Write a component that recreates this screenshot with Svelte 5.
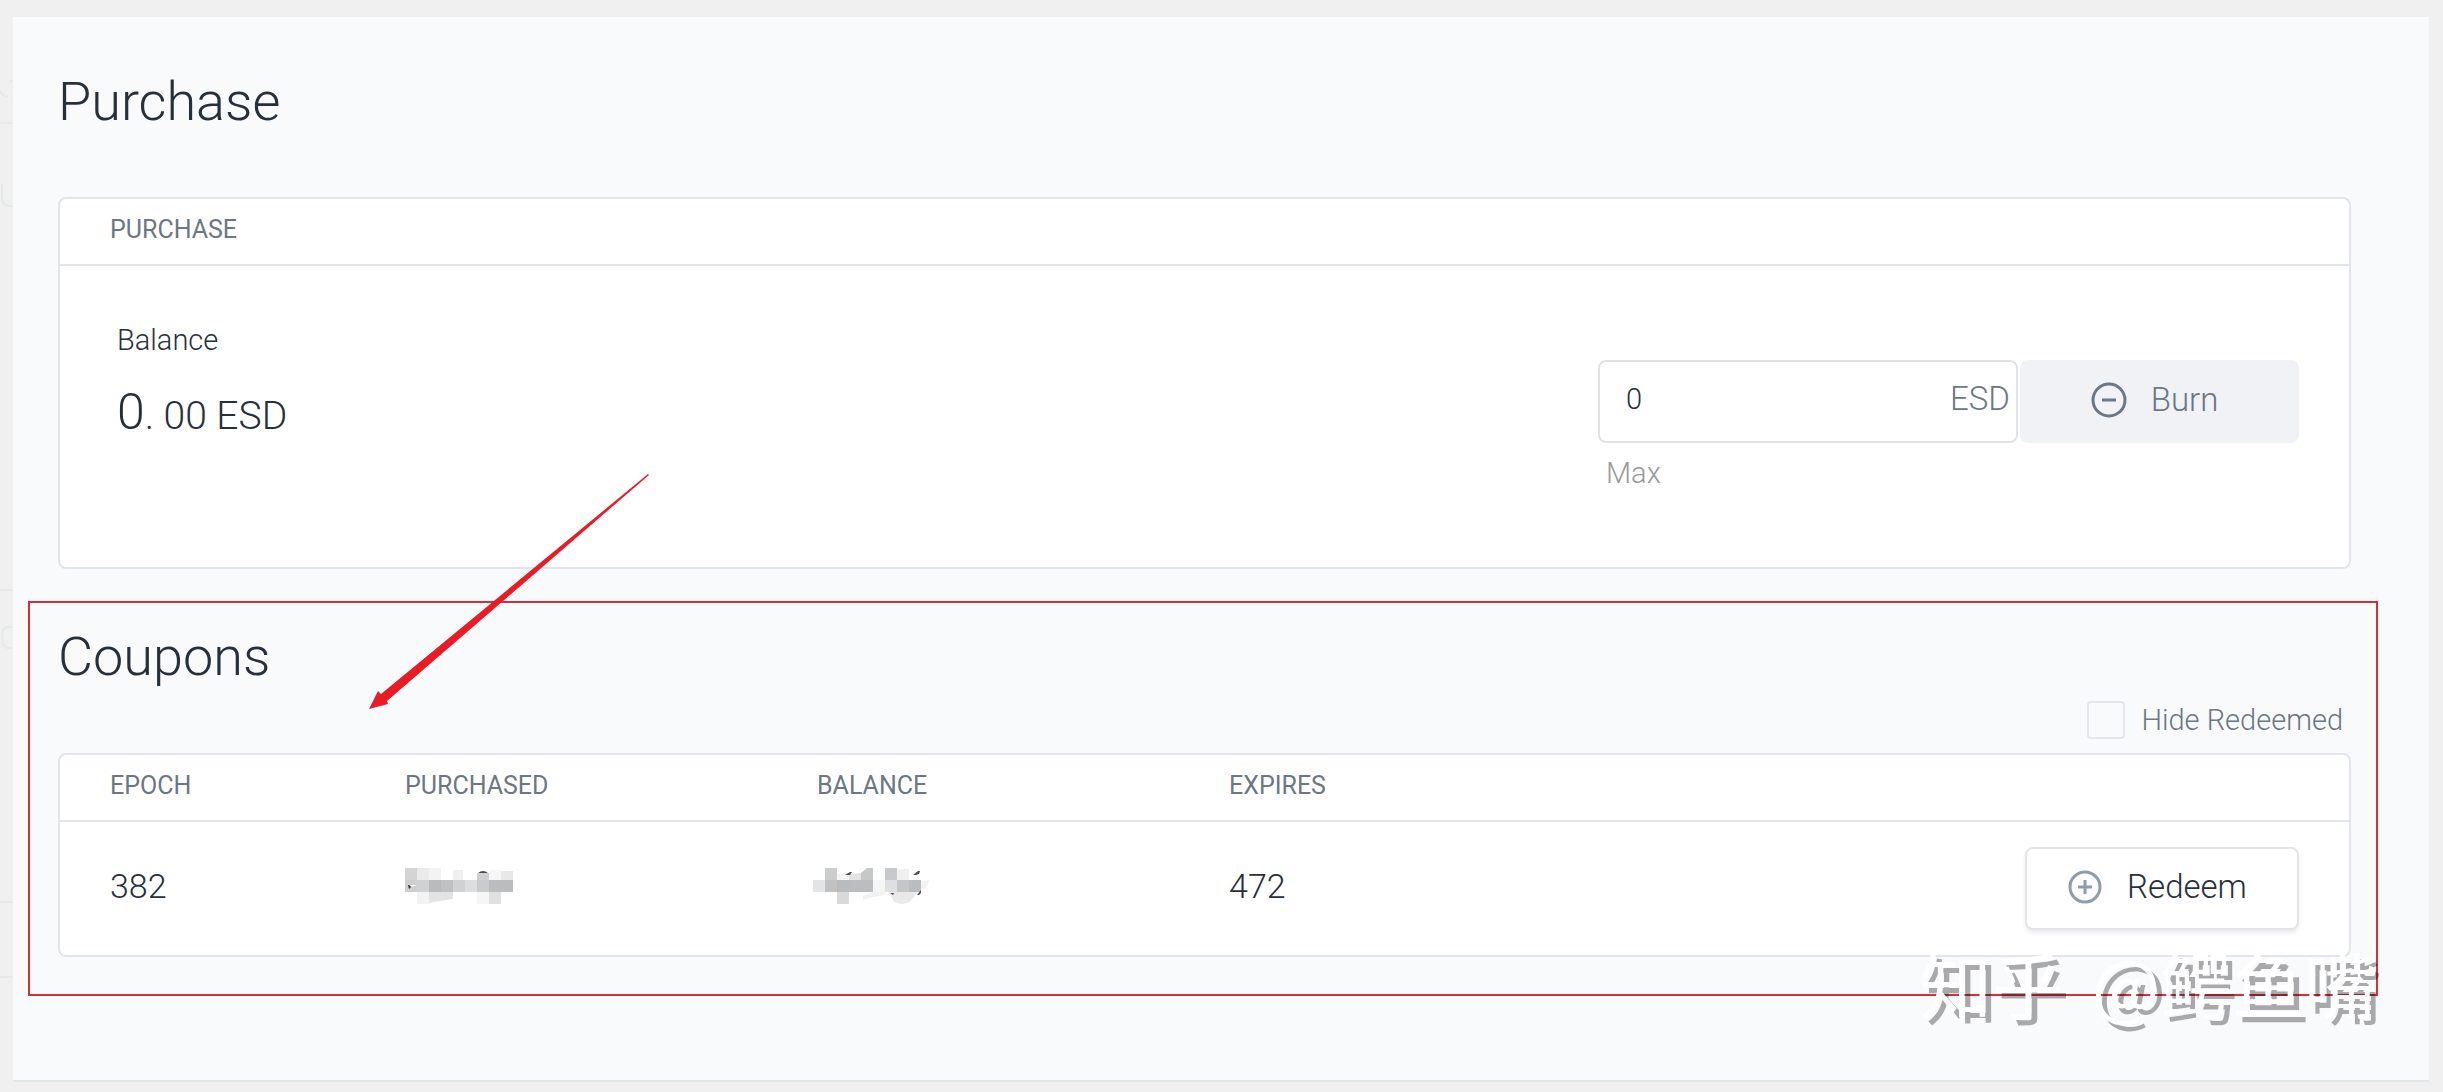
<script lang="ts">
	interface Tile {
		x: number;
		y: number;
		w: number;
		h: number;
		fill: string;
	}

	let amount = $state('0');
	let hideRedeemed = $state(false);

	const coupons = [{ epoch: 382, expires: 472 }];

	// pixelated blocks over the hidden amounts
	const purchasedTiles: Tile[] = [
		{ x: 0, y: 6, w: 12, h: 12, fill: '#d4d4d4' },
		{ x: 12, y: 6, w: 12, h: 12, fill: '#ebebeb' },
		{ x: 24, y: 6, w: 12, h: 12, fill: '#f3f3f3' },
		{ x: 48, y: 8, w: 10, h: 10, fill: '#f0f0f0' },
		{ x: 72, y: 11, w: 12, h: 7, fill: '#cfcfd1' },
		{ x: 84, y: 8, w: 12, h: 10, fill: '#f6f6f6' },
		{ x: 96, y: 9, w: 12, h: 9, fill: '#e8e8e8' },
		{ x: 0, y: 18, w: 12, h: 12, fill: '#cfcfd0' },
		{ x: 12, y: 18, w: 12, h: 12, fill: '#d0d1d3' },
		{ x: 24, y: 18, w: 12, h: 12, fill: '#b9bbbd' },
		{ x: 36, y: 18, w: 12, h: 12, fill: '#bfc0c2' },
		{ x: 48, y: 18, w: 12, h: 12, fill: '#d0d1d3' },
		{ x: 60, y: 18, w: 12, h: 12, fill: '#dddee0' },
		{ x: 72, y: 18, w: 12, h: 12, fill: '#cacbcf' },
		{ x: 84, y: 18, w: 24, h: 12, fill: '#bbbcbe' },
		{ x: 12, y: 30, w: 12, h: 12, fill: '#f3f3f3' },
		{ x: 72, y: 30, w: 12, h: 12, fill: '#f6f6f6' },
		{ x: 84, y: 30, w: 12, h: 12, fill: '#e0e0e0' }
	];

	const balanceTiles: Tile[] = [
		{ x: 8, y: 6, w: 12, h: 12, fill: '#cbcccd' },
		{ x: 20, y: 12, w: 12, h: 6, fill: '#f5f5f5' },
		{ x: 68, y: 6, w: 12, h: 12, fill: '#c8c9cb' },
		{ x: 80, y: 7, w: 12, h: 11, fill: '#efefef' },
		{ x: -4, y: 18, w: 12, h: 12, fill: '#e2e4e6' },
		{ x: 8, y: 18, w: 12, h: 12, fill: '#bfc1c3' },
		{ x: 20, y: 18, w: 12, h: 12, fill: '#b7bcc0' },
		{ x: 32, y: 18, w: 24, h: 12, fill: '#bcbdbf' },
		{ x: 56, y: 18, w: 12, h: 12, fill: '#f5f6f7' },
		{ x: 68, y: 18, w: 12, h: 12, fill: '#dcdfe3' },
		{ x: 80, y: 18, w: 12, h: 12, fill: '#c4c7ca' },
		{ x: 92, y: 18, w: 12, h: 12, fill: '#b8bdc0' },
		{ x: 20, y: 30, w: 12, h: 12, fill: '#d9d9da' }
	];
</script>

<main class="page">
	<svg class="ghost" viewBox="0 0 13 1000" aria-hidden="true">
		<path d="M0 74q5 8 8 5M10 65l3-2M0 106h13M2 167v15q1 7 7 7h4M0 573h13M13 610H8q-6 0-6 10t6 11h5M0 885h13M0 960h13" />
	</svg>
	<section class="purchase">
		<h1>Purchase</h1>
		<div class="card">
			<h2 class="card-head">Purchase</h2>
			<div class="card-body">
				<div class="balance">
					<span class="label">Balance</span>
					<span class="value"><span class="whole">0</span>. 00 ESD</span>
				</div>
				<div class="burn">
					<div class="burn-row">
						<label class="field">
							<input type="text" aria-label="Amount to burn" bind:value={amount} />
							<span>ESD</span>
						</label>
						<button class="btn btn-disabled" type="button">
							<svg viewBox="0 0 36 36" aria-hidden="true">
								<circle cx="18" cy="18" r="16" />
								<path d="M11 18h14" />
							</svg>
							Burn
						</button>
					</div>
					<button class="max" type="button">Max</button>
				</div>
			</div>
		</div>
	</section>

	<section class="coupons">
		<h1>Coupons</h1>
		<label class="hide">
			<input type="checkbox" bind:checked={hideRedeemed} />
			Hide Redeemed
		</label>
		<div class="card">
			<table>
				<thead>
					<tr>
						<th class="col-epoch">Epoch</th>
						<th class="col-amount">Purchased</th>
						<th class="col-amount">Balance</th>
						<th class="col-expires">Expires</th>
						<th></th>
					</tr>
				</thead>
				<tbody>
					{#each coupons as coupon}
						<tr>
							<td>{coupon.epoch}</td>
							<td>
								<svg class="mosaic" viewBox="0 0 116 48" aria-hidden="true">
									{#each purchasedTiles as t}
										<rect x={t.x} y={t.y} width={t.w} height={t.h} fill={t.fill} />
									{/each}
									<path d="M24 30h24v7l-24 4z" fill="#e3e3e3" />
									<path d="M73 11q5-4 10 0z" fill="#4a4a52" />
									<path d="M3 23l4 1-3 3z" fill="#333" />
									<path d="M5 23l7 0-6 2z" fill="#fff" />
								</svg>
							</td>
							<td>
								<svg class="mosaic" viewBox="0 0 116 48" aria-hidden="true">
									{#each balanceTiles as t}
										<rect x={t.x} y={t.y} width={t.w} height={t.h} fill={t.fill} />
									{/each}
									<path d="M32 12l12-1v7H32z" fill="#e4e4e4" />
									<path d="M44 11l6-5h6v12H44z" fill="#c6c7c9" />
									<path d="M104 19l9-1-4 8-5 2z" fill="#f3f3f3" />
									<path d="M46 34l10-4h12v3l-12 2-10 3z" fill="#f1f1f1" />
									<path d="M72 30h28l-7 10-8 2-8-2z" fill="#e9e9e9" />
									<path d="M28 13l5-3h2l-2 3zM96 13l5-4h2l-1 3-3 1zM100 33l4-5v3l-2 2zM73 31h4l-1 2z" fill="#4a4a52" />
								</svg>
							</td>
							<td>{coupon.expires}</td>
							<td class="action">
								<button class="btn btn-outline" type="button">
									<svg viewBox="0 0 36 36" aria-hidden="true">
										<circle cx="18" cy="18" r="15" />
										<path d="M11 18h14M18 11v14" />
									</svg>
									Redeem
								</button>
							</td>
						</tr>
					{/each}
				</tbody>
			</table>
		</div>
		<svg class="arrow" viewBox="0 0 280 236" aria-hidden="true">
			<path d="M279 0L280 1L18 227L19 230L0 235L9 217L12 220Z" />
		</svg>
		<div class="watermark">
			<span>知乎</span>
			<span>@鳄鱼嘴</span>
		</div>
	</section>
</main>

<style>
	:global(body) {
		background: #f0f0f0;
	}
	.page {
		position: relative;
		margin: 17px 14px 0 13px;
		padding-bottom: 84px;
		background: #f9fafc;
		border-bottom: 2px solid #e3e6e9;
		box-shadow: 0 5px 0 #fff;
		color: #26303b;
		font-family: Roboto, 'Liberation Sans', sans-serif;
		font-weight: 300;
		font-size: 29px;
		line-height: 36px;
	}
	.ghost {
		position: absolute;
		top: 0;
		left: -13px;
		width: 13px;
		height: 1000px;
		fill: none;
		stroke: #e7e8e9;
		stroke-width: 2;
	}
	h1 {
		margin: 0;
		font-size: 54px;
		font-weight: 300;
		line-height: 64px;
	}
	.card {
		background: #fff;
		border: 2px solid #e2e5e9;
		border-radius: 8px;
	}
	.purchase {
		padding: 53px 78px 32px 45px;
	}
	.purchase .card {
		margin-top: 63px;
	}
	.card-head,
	th {
		color: #6b7784;
		font-size: 25px;
		font-weight: 400;
		line-height: 32px;
		text-align: left;
		text-transform: uppercase;
	}
	.card-head {
		margin: 0;
		padding: 15px 50px 18px;
		border-bottom: 2px solid #e2e5e9;
	}
	.card-body {
		display: flex;
		justify-content: space-between;
		padding: 56px 50px 76px 57px;
	}
	.balance {
		display: flex;
		flex-direction: column;
		gap: 24px;
	}
	.value {
		font-size: 39px;
		line-height: 60px;
		white-space: pre;
	}
	.whole {
		font-size: 50px;
	}
	.burn {
		padding-top: 38px;
	}
	.burn-row {
		display: flex;
		gap: 2px;
	}
	.field {
		display: flex;
		align-items: center;
		box-sizing: border-box;
		width: 420px;
		height: 83px;
		padding: 0 6px 6px 26px;
		border: 2px solid #dfe3e6;
		border-radius: 8px;
		color: #6b7784;
		font-size: 33px;
	}
	.field input {
		flex: 1;
		min-width: 0;
		padding: 0;
		border: 0;
		outline: 0;
		background: none;
		color: #26303b;
		font: inherit;
		font-size: 29px;
	}
	.btn {
		display: flex;
		align-items: center;
		justify-content: center;
		box-sizing: border-box;
		height: 83px;
		padding: 0 10px 4px 0;
		border: 0;
		border-radius: 8px;
		font: inherit;
		font-size: 33px;
	}
	.btn svg {
		width: 36px;
		height: 36px;
		fill: none;
		stroke: currentColor;
		stroke-width: 3;
	}
	.btn-disabled {
		gap: 24px;
		width: 279px;
		background: #f0f2f6;
		color: #6b7784;
	}
	.btn-outline {
		gap: 24px;
		width: 274px;
		border: 2px solid #e2e5e9;
		background: #fff;
		box-shadow: 0 3px 4px #00000014;
		color: #26303b;
	}
	.btn-outline svg {
		stroke: #8d9dab;
	}
	.max {
		margin: 12px 0 0;
		padding: 0 8px;
		border: 0;
		background: none;
		color: #999;
		font: inherit;
	}
	.coupons {
		position: relative;
		margin: 0 51px 0 15px;
		padding: 22px 25px 37px 28px;
		border: 2px solid #d62f3a;
	}
	.hide {
		display: flex;
		align-items: center;
		justify-content: flex-end;
		gap: 16px;
		margin: 12px 8px 14px 0;
		color: #6b7784;
	}
	.hide input {
		appearance: none;
		box-sizing: border-box;
		width: 38px;
		height: 38px;
		margin: 0;
		border: 2px solid #e3e6ea;
		border-radius: 4px;
	}
	table {
		width: 100%;
		border-collapse: collapse;
		table-layout: fixed;
	}
	th {
		padding: 15px 0 18px;
		border-bottom: 2px solid #e2e5e9;
	}
	td {
		padding: 22px 0 28px;
		font-size: 34px;
	}
	th:first-child,
	td:first-child {
		padding-left: 50px;
	}
	.col-epoch {
		width: 295px;
	}
	.col-amount,
	.col-expires {
		width: 18%;
	}
	.action {
		padding: 25px 50px 25px 0;
	}
	.action .btn {
		margin-left: auto;
	}
	.mosaic {
		display: block;
		width: 116px;
		height: 48px;
		overflow: visible;
	}
	.arrow {
		position: absolute;
		top: -129px;
		left: 339px;
		width: 280px;
		height: 236px;
		fill: #e91c26;
	}
	.watermark {
		display: flex;
		gap: 28px;
		position: absolute;
		right: 0;
		bottom: -32px;
		color: #fff;
		font-family: 'Noto Sans CJK SC', sans-serif;
		font-size: 72px;
		font-weight: 400;
		line-height: 88px;
		text-shadow: 6px 6px 0 #00000052;
		white-space: nowrap;
	}
</style>
